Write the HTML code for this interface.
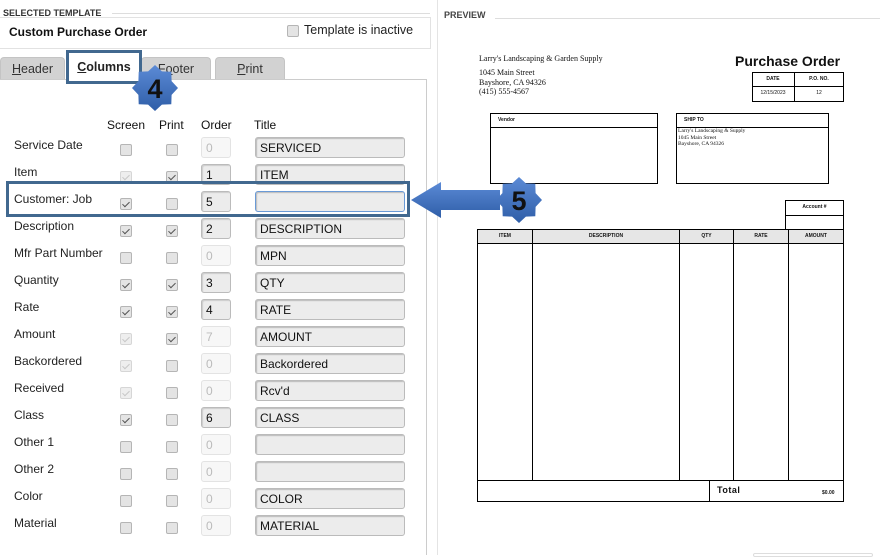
<!DOCTYPE html>
<html><head><meta charset="utf-8"><style>
*{margin:0;padding:0;box-sizing:border-box}
body{width:880px;height:555px;background:#fff;position:relative;overflow:hidden;font-family:"Liberation Sans",Arial,sans-serif;color:#111}
.a{position:absolute}
.lbl{position:absolute;left:14px;font-size:12px;color:#222}
.cb{position:absolute;width:12px;height:12px;border:1px solid #b5b5b5;border-radius:2px;background:#e4e4e4}
.cb.c::after,.cb.d::after{content:"";position:absolute;left:3px;top:1px;width:3px;height:6px;border:solid #555;border-width:0 1.5px 1.5px 0;transform:rotate(45deg)}
.cb.d::after{border-color:#c8c8c8}
.cb.d{background:#eee;border-color:#d6d6d6}
.ord{position:absolute;left:201px;width:30px;height:21px;border:1px solid #bbb;border-radius:3px;background:#ececec;font-size:12px;padding:3px 0 0 4px;box-shadow:inset 1px 1px 1px #ccc}
.ord.x{background:#f7f7f7;border-color:#e3e3e3;color:#bbb;box-shadow:none}
.ttl{position:absolute;left:255px;width:150px;height:21px;border:1px solid #bbb;border-radius:3px;background:#ececec;font-size:12px;padding:3px 0 0 4px;box-shadow:inset 1px 1px 1px #bbb}
.tab{position:absolute;top:57px;height:23px;background:#d2d2d2;border:1px solid #c4c4c4;border-bottom:none;border-radius:4px 4px 0 0;font-size:12.5px;text-align:center;padding-top:4px;color:#333}
.s{font-family:"Liberation Serif",serif}
.t{font-size:5px;font-weight:bold;text-align:center;position:absolute}
</style></head><body>
<div class="a" style="left:3px;top:8px;font-size:9px;font-weight:bold;color:#333">SELECTED TEMPLATE</div>
<div class="a" style="left:112px;top:13px;width:318px;border-top:1px solid #ddd"></div>
<div class="a" style="left:0;top:17px;width:431px;height:32px;border:1px solid #e2e2e2;border-left:none"></div>
<div class="a" style="left:9px;top:25px;font-size:12px;font-weight:bold">Custom Purchase Order</div>
<div class="cb a" style="left:287px;top:25px;width:12px;height:12px"></div>
<div class="a" style="left:304px;top:23px;font-size:12.5px;color:#222">Template is inactive</div>
<div class="a" style="left:437px;top:0;width:1px;height:555px;background:#e4e4e4"></div>
<div class="a" style="left:444px;top:10px;font-size:9px;font-weight:bold;color:#444">PREVIEW</div>
<div class="a" style="left:495px;top:18px;width:385px;border-top:1px solid #ddd"></div>
<div class="tab" style="left:0;width:65px"><u>H</u>eader</div>
<div class="tab" style="left:141px;width:70px">F<u>o</u>oter</div>
<div class="tab" style="left:215px;width:70px"><u>P</u>rint</div>
<div class="a" style="left:0;top:79px;width:427px;border-top:1px solid #ccc"></div>
<div class="a" style="left:426px;top:79px;width:1px;height:476px;background:#ccc"></div>
<div class="a" style="left:68px;top:53px;width:72px;height:28px;background:#fff;font-size:12.5px;text-align:center;padding-top:7px;font-weight:bold;color:#222"><u>C</u>olumns</div>
<div class="a" style="left:107px;top:118px;font-size:12px">Screen</div>
<div class="a" style="left:159px;top:118px;font-size:12px">Print</div>
<div class="a" style="left:201px;top:118px;font-size:12px">Order</div>
<div class="a" style="left:254px;top:118px;font-size:12px">Title</div>

<div class="lbl" style="top:138px">Service Date</div><div class="cb" style="left:120px;top:144px"></div><div class="cb" style="left:166px;top:144px"></div><div class="ord x" style="top:137px">0</div><div class="ttl" style="top:137px">SERVICED</div>
<div class="lbl" style="top:165px">Item</div><div class="cb d" style="left:120px;top:171px"></div><div class="cb c" style="left:166px;top:171px"></div><div class="ord" style="top:164px">1</div><div class="ttl" style="top:164px">ITEM</div>
<div class="lbl" style="top:192px">Customer: Job</div><div class="cb c" style="left:120px;top:198px"></div><div class="cb" style="left:166px;top:198px"></div><div class="ord" style="top:191px">5</div><div class="ttl" style="top:191px;border-color:#6a9ad6"></div>
<div class="lbl" style="top:219px">Description</div><div class="cb c" style="left:120px;top:225px"></div><div class="cb c" style="left:166px;top:225px"></div><div class="ord" style="top:218px">2</div><div class="ttl" style="top:218px">DESCRIPTION</div>
<div class="lbl" style="top:246px">Mfr Part Number</div><div class="cb" style="left:120px;top:252px"></div><div class="cb" style="left:166px;top:252px"></div><div class="ord x" style="top:245px">0</div><div class="ttl" style="top:245px">MPN</div>
<div class="lbl" style="top:273px">Quantity</div><div class="cb c" style="left:120px;top:279px"></div><div class="cb c" style="left:166px;top:279px"></div><div class="ord" style="top:272px">3</div><div class="ttl" style="top:272px">QTY</div>
<div class="lbl" style="top:300px">Rate</div><div class="cb c" style="left:120px;top:306px"></div><div class="cb c" style="left:166px;top:306px"></div><div class="ord" style="top:299px">4</div><div class="ttl" style="top:299px">RATE</div>
<div class="lbl" style="top:327px">Amount</div><div class="cb d" style="left:120px;top:333px"></div><div class="cb c" style="left:166px;top:333px"></div><div class="ord x" style="top:326px">7</div><div class="ttl" style="top:326px">AMOUNT</div>
<div class="lbl" style="top:354px">Backordered</div><div class="cb d" style="left:120px;top:360px"></div><div class="cb" style="left:166px;top:360px"></div><div class="ord x" style="top:353px">0</div><div class="ttl" style="top:353px">Backordered</div>
<div class="lbl" style="top:381px">Received</div><div class="cb d" style="left:120px;top:387px"></div><div class="cb" style="left:166px;top:387px"></div><div class="ord x" style="top:380px">0</div><div class="ttl" style="top:380px">Rcv'd</div>
<div class="lbl" style="top:408px">Class</div><div class="cb c" style="left:120px;top:414px"></div><div class="cb" style="left:166px;top:414px"></div><div class="ord" style="top:407px">6</div><div class="ttl" style="top:407px">CLASS</div>
<div class="lbl" style="top:435px">Other 1</div><div class="cb" style="left:120px;top:441px"></div><div class="cb" style="left:166px;top:441px"></div><div class="ord x" style="top:434px">0</div><div class="ttl" style="top:434px"></div>
<div class="lbl" style="top:462px">Other 2</div><div class="cb" style="left:120px;top:468px"></div><div class="cb" style="left:166px;top:468px"></div><div class="ord x" style="top:461px">0</div><div class="ttl" style="top:461px"></div>
<div class="lbl" style="top:489px">Color</div><div class="cb" style="left:120px;top:495px"></div><div class="cb" style="left:166px;top:495px"></div><div class="ord x" style="top:488px">0</div><div class="ttl" style="top:488px">COLOR</div>
<div class="lbl" style="top:516px">Material</div><div class="cb" style="left:120px;top:522px"></div><div class="cb" style="left:166px;top:522px"></div><div class="ord x" style="top:515px">0</div><div class="ttl" style="top:515px">MATERIAL</div>

<!-- preview document -->
<div class="a s" style="left:479px;top:54px;font-size:8px">Larry's Landscaping &amp; Garden Supply</div>
<div class="a s" style="left:479px;top:68px;font-size:8px;line-height:9.5px">1045 Main Street<br>Bayshore, CA 94326<br>(415) 555-4567</div>
<div class="a" style="left:735px;top:53px;font-size:14px;font-weight:bold">Purchase Order</div>
<div class="a" style="left:752px;top:72px;width:92px;height:30px;border:1px solid #000"></div>
<div class="a" style="left:752px;top:86px;width:92px;border-top:1px solid #000"></div>
<div class="a" style="left:794px;top:72px;height:30px;border-left:1px solid #000"></div>
<div class="t" style="left:752px;top:76px;width:42px">DATE</div><div class="t" style="left:794px;top:76px;width:50px">P.O. NO.</div>
<div class="t" style="left:752px;top:90px;width:42px;font-weight:normal">12/15/2023</div><div class="t" style="left:794px;top:90px;width:50px;font-weight:normal">12</div>
<div class="a" style="left:490px;top:113px;width:168px;height:71px;border:1px solid #000"></div>
<div class="a" style="left:490px;top:127px;width:168px;border-top:1px solid #000"></div>
<div class="t" style="left:498px;top:117px">Vendor</div>
<div class="a" style="left:676px;top:113px;width:153px;height:71px;border:1px solid #000"></div>
<div class="a" style="left:676px;top:127px;width:153px;border-top:1px solid #000"></div>
<div class="t" style="left:684px;top:117px">SHIP TO</div>
<div class="a s" style="left:678px;top:128px;font-size:5.5px;line-height:6.5px">Larry's Landscaping &amp; Supply<br>1045 Main Street<br>Bayshore, CA 94326</div>
<div class="a" style="left:785px;top:200px;width:59px;height:30px;border:1px solid #000"></div>
<div class="a" style="left:785px;top:215px;width:59px;border-top:1px solid #000"></div>
<div class="t" style="left:785px;top:204px;width:59px">Account #</div>
<div class="a" style="left:477px;top:229px;width:367px;height:273px;border:1px solid #000"></div>
<div class="a" style="left:478px;top:230px;width:365px;height:14px;background:#e6e6e6;border-bottom:1px solid #000"></div>
<div class="a" style="left:532px;top:229px;height:252px;border-left:1px solid #000"></div>
<div class="a" style="left:679px;top:229px;height:252px;border-left:1px solid #000"></div>
<div class="a" style="left:733px;top:229px;height:252px;border-left:1px solid #000"></div>
<div class="a" style="left:788px;top:229px;height:252px;border-left:1px solid #000"></div>
<div class="a" style="left:477px;top:480px;width:367px;border-top:1px solid #000"></div>
<div class="a" style="left:709px;top:480px;height:22px;border-left:1px solid #000"></div>
<div class="t" style="left:478px;top:233px;width:54px">ITEM</div>
<div class="t" style="left:533px;top:233px;width:146px">DESCRIPTION</div>
<div class="t" style="left:680px;top:233px;width:53px">QTY</div>
<div class="t" style="left:734px;top:233px;width:54px">RATE</div>
<div class="t" style="left:789px;top:233px;width:54px">AMOUNT</div>
<div class="a" style="left:717px;top:485px;font-size:9px;font-weight:bold;letter-spacing:0.5px">Total</div>
<div class="t" style="left:822px;top:490px">$0.00</div>
<div class="a" style="left:753px;top:553px;width:120px;height:4px;border:1px solid #ddd;border-radius:3px"></div>

<svg class="a" style="left:0;top:0" width="880" height="555">
<defs><linearGradient id="g" x1="0" y1="0" x2="0" y2="1"><stop offset="0" stop-color="#5b8ad6"/><stop offset="1" stop-color="#2f5ea8"/></linearGradient></defs>
<rect x="67.5" y="51.5" width="73" height="31" fill="none" stroke="#41688f" stroke-width="3"/>
<rect x="7.5" y="182.5" width="401" height="33" fill="none" stroke="#41688f" stroke-width="3"/>
<polygon points="411,200 441,182 441,190 500,190 500,210 441,210 441,218" fill="url(#g)"/>
<g transform="translate(155,88)"><polygon fill="url(#g)" points="0,-23 6.9,-16.6 16.3,-16.3 16.6,-6.9 23,0 16.6,6.9 16.3,16.3 6.9,16.6 0,23 -6.9,16.6 -16.3,16.3 -16.6,6.9 -23,0 -16.6,-6.9 -16.3,-16.3 -6.9,-16.6"/></g>
<g transform="translate(519,200)"><polygon fill="url(#g)" points="0,-23 6.9,-16.6 16.3,-16.3 16.6,-6.9 23,0 16.6,6.9 16.3,16.3 6.9,16.6 0,23 -6.9,16.6 -16.3,16.3 -16.6,6.9 -23,0 -16.6,-6.9 -16.3,-16.3 -6.9,-16.6"/></g>
<text x="155" y="98" font-family="Liberation Sans,sans-serif" font-size="27" font-weight="bold" text-anchor="middle" fill="#111">4</text>
<text x="519" y="210" font-family="Liberation Sans,sans-serif" font-size="27" font-weight="bold" text-anchor="middle" fill="#111">5</text>
</svg>
</body></html>
